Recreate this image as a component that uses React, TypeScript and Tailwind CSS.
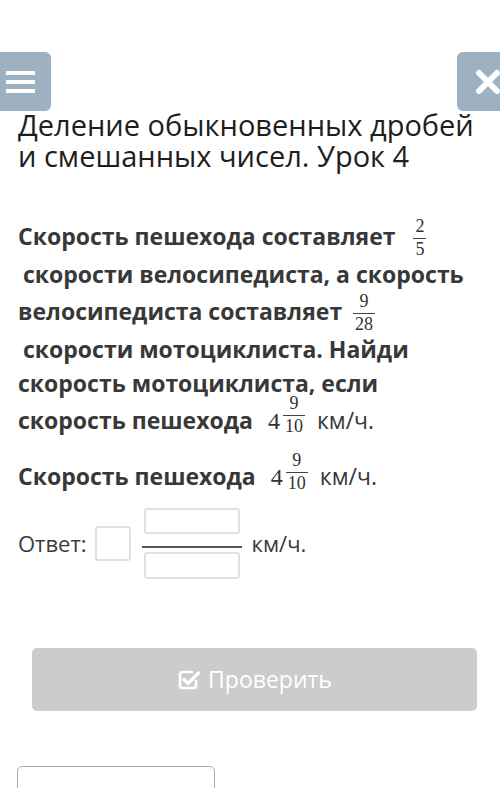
import React from "react";

const serif = { fontFamily: '"Liberation Serif", "DejaVu Serif", serif' };

function Frac({ n, d, className = "" }: { n: string; d: string; className?: string }) {
  return (
    <span
      className={`inline-flex flex-col items-center font-normal text-[18px] leading-[13px] text-[#333] ${className}`}
      style={serif}
    >
      <span className="px-[2px]">{n}</span>
      <span className="h-[1px] self-stretch bg-[#444] mt-[5px] mb-[4px]" />
      <span className="px-[2px]">{d}</span>
    </span>
  );
}

function Mixed({ w, n, d, lift }: { w: string; n: string; d: string; lift: string }) {
  return (
    <span className="ml-[15px] mr-[12px] font-normal">
      <span className="text-[24px] text-[#333] mr-[3px]" style={serif}>
        {w}
      </span>
      <Frac n={n} d={d} className={lift} />
    </span>
  );
}

function CheckSquare() {
  return (
    <svg width="24" height="22" viewBox="0 0 24 22" fill="none">
      <path
        d="M15 3H5.5A2.5 2.5 0 0 0 3 5.5v11A2.5 2.5 0 0 0 5.5 19h11a2.5 2.5 0 0 0 2.5-2.5V12"
        stroke="white"
        strokeWidth="2.6"
        strokeLinecap="round"
      />
      <path d="M7 10.5l4 4L21.5 4" stroke="white" strokeWidth="3.4" strokeLinecap="round" strokeLinejoin="round" />
    </svg>
  );
}

export default function App() {
  return (
    <div
      className="relative w-[500px] h-[788px] overflow-hidden bg-white text-[#333]"
      style={{ fontFamily: '"Open Sans", "Noto Sans", sans-serif' }}
    >
      {/* header buttons */}
      <div className="flex justify-between pt-[52px]">
        <div className="ml-[-8px] w-[59px] h-[59px] rounded-[6px] bg-[#9db1c2] flex flex-col justify-center gap-[5px] pl-[14px]">
          <span className="block w-[29px] h-[4px] bg-white" />
          <span className="block w-[29px] h-[4px] bg-white" />
          <span className="block w-[29px] h-[4px] bg-white" />
        </div>
        <div className="mr-[-18px] w-[61px] h-[59px] rounded-[6px] bg-[#9db1c2] flex items-center justify-center">
          <svg width="26" height="26" viewBox="0 0 26 26">
            <path d="M4 4L22 22M22 4L4 22" stroke="white" strokeWidth="6" strokeLinecap="round" />
          </svg>
        </div>
      </div>

      {/* title */}
      <h1 className="px-[18px] text-[29px] leading-[31px] text-[#1e1e1e] font-normal mt-[-2px] whitespace-nowrap">
        Деление обыкновенных дробей
        <br />и смешанных чисел. Урок 4
      </h1>

      {/* problem text */}
      <div className="px-[18px] mt-[46px] text-[23px] font-bold text-[#383838]">
        <div className="h-[38px] leading-[38px] whitespace-nowrap">
          Скорость пешехода составляет <Frac n="2" d="5" className="ml-[12px] align-[13px]" />
        </div>
        <div className="h-[37px] leading-[38px] whitespace-nowrap pl-[5px]">скорости велосипедиста, а скорость</div>
        <div className="h-[38px] leading-[38px] whitespace-nowrap">
          велосипедиста составляет <Frac n="9" d="28" className="ml-[5px] align-[13px]" />
        </div>
        <div className="h-[34px] leading-[38px] whitespace-nowrap pl-[5px]">скорости мотоциклиста. Найди</div>
        <div className="h-[33px] leading-[38px] whitespace-nowrap">скорость мотоциклиста, если</div>
        <div className="h-[38px] leading-[38px] whitespace-nowrap">
          скорость пешехода
          <Mixed w="4" n="9" d="10" lift="align-[20px]" />
          <span className="font-normal">км/ч.</span>
        </div>
        <div className="h-[38px] leading-[38px] whitespace-nowrap mt-[19px]">
          Скорость пешехода
          <Mixed w="4" n="9" d="10" lift="align-[19px]" />
          <span className="font-normal">км/ч.</span>
        </div>
      </div>

      {/* answer */}
      <div className="flex items-center px-[18px] mt-[16px] h-[71px] text-[22px] text-[#3a3a3a]">
        <span>Ответ:</span>
        <div className="ml-[8px] w-[36px] h-[35px] rounded-[3px] border-2 border-[#dde2e2] bg-white mt-[-1px]" />
        <div className="ml-[11px] flex flex-col items-center w-[100px]">
          <div className="w-[96px] h-[26px] rounded-[3px] border-2 border-[#dde2e2]" />
          <div className="w-[100px] h-[2px] bg-[#555] mt-[12px] mb-[4px]" />
          <div className="w-[96px] h-[27px] rounded-[3px] border-2 border-[#dde2e2]" />
        </div>
        <span className="ml-[10px]">км/ч.</span>
      </div>

      {/* check button */}
      <div className="ml-[32px] mt-[69px] w-[445px] h-[63px] rounded-[5px] bg-[#cccccc] flex items-center justify-center gap-[7px] text-white text-[23px]">
        <CheckSquare />
        <span>Проверить</span>
      </div>

      {/* bottom box */}
      <div className="ml-[17px] mt-[55px] w-[198px] h-[60px] rounded-[5px] border border-[#9fb1ae] bg-white" />
    </div>
  );
}
